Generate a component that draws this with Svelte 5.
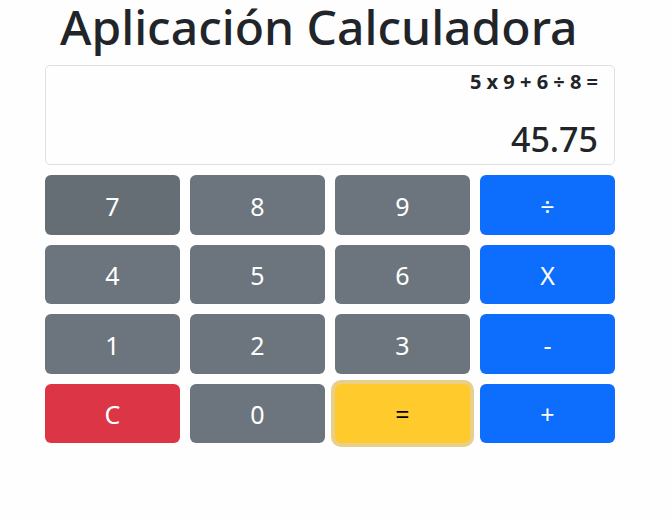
<script>
  const keys = [
    { label: '7', kind: 'secondary', hovered: true },
    { label: '8', kind: 'secondary' },
    { label: '9', kind: 'secondary' },
    { label: '÷', kind: 'primary' },
    { label: '4', kind: 'secondary' },
    { label: '5', kind: 'secondary' },
    { label: '6', kind: 'secondary' },
    { label: 'X', kind: 'primary' },
    { label: '1', kind: 'secondary' },
    { label: '2', kind: 'secondary' },
    { label: '3', kind: 'secondary' },
    { label: '-', kind: 'primary' },
    { label: 'C', kind: 'danger' },
    { label: '0', kind: 'secondary' },
    { label: '=', kind: 'warning' },
    { label: '+', kind: 'primary' }
  ];

  let history = $state('5 x 9 + 6 ÷ 8 =');
  let current = $state('45.75');
  let active = $state('=');

  // Products and quotients fold into the last term; the terms are then summed.
  function evaluate(expression) {
    const parts = expression.split(' ');
    const terms = [Number(parts[0])];
    for (let i = 1; i + 1 < parts.length; i += 2) {
      const value = Number(parts[i + 1]);
      if (parts[i] === 'x') terms.push(terms.pop() * value);
      else if (parts[i] === '÷') terms.push(terms.pop() / value);
      else terms.push(parts[i] === '-' ? -value : value);
    }
    return terms.reduce((sum, term) => sum + term, 0);
  }

  function press(label) {
    const finished = history.endsWith('=');
    active = label;
    if (label === 'C') {
      history = '';
      current = '0';
    } else if (/\d/.test(label)) {
      if (finished) history = '';
      current = finished || current === '0' || current === '' ? label : current + label;
    } else if (label === '=') {
      if (finished || current === '') return;
      const expression = `${history} ${current}`.trim();
      current = String(evaluate(expression));
      history = `${expression} =`;
    } else if (current !== '') {
      const start = finished ? '' : history;
      history = `${start} ${current} ${label.toLowerCase()}`.trim();
      current = '';
    }
  }
</script>

<main class="calculator">
  <h1>Aplicación Calculadora</h1>
  <section class="display" aria-live="polite">
    <p class="history">{history}</p>
    <p class="current">{current}</p>
  </section>
  <div class="keypad">
    {#each keys as key}
      <button
        type="button"
        class={['key', key.kind, { hovered: key.hovered, active: active === key.label }]}
        onclick={() => press(key.label)}>{key.label}</button>
    {/each}
  </div>
</main>

<style>
  :global(body) {
    background: #fefefe;
  }

  .calculator {
    box-sizing: border-box;
    padding: 0 56px 24px 45px;
    font-family: 'Segoe UI', 'Noto Sans', 'Open Sans', sans-serif;
    color: #212529;
  }

  h1 {
    margin: 0 0 12px;
    padding-left: 15px;
    font-size: 48px;
    font-weight: 500;
    line-height: 53px;
    white-space: nowrap;
  }

  .display {
    box-sizing: border-box;
    display: flex;
    flex-direction: column;
    justify-content: space-between;
    min-height: 100px;
    margin-bottom: 10px;
    padding: 4px 16px;
    border: 1px solid #dee0e2;
    border-radius: 5px;
    text-align: right;
  }

  p {
    margin: 0;
  }

  .history {
    min-height: 24px;
    font-size: 20px;
    font-weight: 700;
    line-height: 24px;
  }

  .current {
    min-height: 42px;
    font-size: 34px;
    font-weight: 500;
    line-height: 42px;
  }

  .keypad {
    display: grid;
    grid-template-columns: repeat(4, 1fr);
    grid-template-rows: repeat(4, 1fr);
    gap: 10px;
    min-height: 268px;
  }

  .key {
    padding: 2px 0 0;
    border: 0;
    border-radius: 6px;
    color: #fff;
    font-family: inherit;
    font-size: 25px;
    line-height: 36px;
    cursor: pointer;
    outline: none;
  }

  .secondary {
    background: #6c757d;
  }

  .secondary.hovered,
  .secondary:hover {
    background: #656e75;
  }

  .primary {
    background: #0d6efd;
  }

  .danger {
    background: #dc3545;
  }

  .warning {
    background: #ffca2c;
    color: #000;
  }

  .active,
  .key:focus-visible {
    box-shadow: 0 0 0 4px #b8c4d6;
  }

  .warning.active {
    box-shadow: 0 0 0 4px #e8d08a;
  }
</style>
